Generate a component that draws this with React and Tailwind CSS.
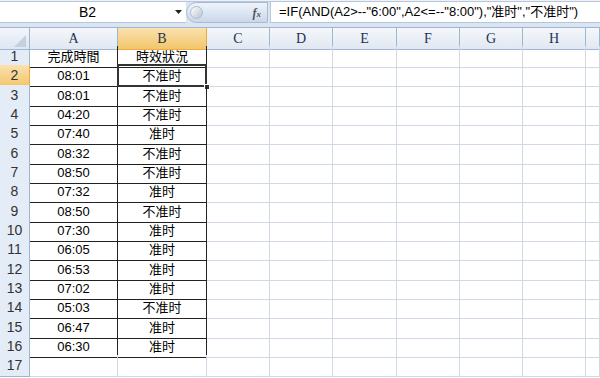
const rows = [
  ["完成時間", "時效狀況"],
  ["08:01", "不准时"],
  ["08:01", "不准时"],
  ["04:20", "不准时"],
  ["07:40", "准时"],
  ["08:32", "不准时"],
  ["08:50", "不准时"],
  ["07:32", "准时"],
  ["08:50", "不准时"],
  ["07:30", "准时"],
  ["06:05", "准时"],
  ["06:53", "准时"],
  ["07:02", "准时"],
  ["05:03", "不准时"],
  ["06:47", "准时"],
  ["06:30", "准时"],
  ["", ""],
];

const heights = [
  "h-[19px]", "h-[20px]", "h-[19px]", "h-[19px]", "h-[20px]", "h-[19px]",
  "h-[19px]", "h-[20px]", "h-[19px]", "h-[19px]", "h-[20px]", "h-[19px]",
  "h-[19px]", "h-[20px]", "h-[19px]", "h-[19px]", "h-[20px]",
];

const cols = ["A", "B", "C", "D", "E", "F", "G", "H", ""];
const grid = "grid grid-cols-[30px_88px_89px_63px_63px_64px_63px_63px_63px_1fr]";
const cjk = { fontFamily: '"Liberation Sans", "Noto Sans CJK TC", sans-serif' };

function FormulaBar() {
  return (
    <div className="h-[28px] bg-[#dbe5f2] border-b border-[#9eb6ce] flex flex-col">
      <div className="h-[2px] bg-[#eef2f8] border-b border-[#b7c6d9]" />
      <div className="flex h-[21px] items-stretch">
        <div className="w-[186px] bg-white border-b border-[#b7c6d9] flex items-center relative">
          <span className="w-[175px] text-center text-[14px] text-black font-['Liberation_Sans']">B2</span>
          <svg width="8" height="5" viewBox="0 0 8 5" className="absolute left-[175px] top-[8px]">
            <path d="M0 0h7L3.5 4z" fill="#222" />
          </svg>
        </div>
        <div className="w-[82px] rounded-l-full bg-gradient-to-b from-[#eef3fa] via-[#dce6f3] to-[#c9d7ea] border border-[#a9bbd3] flex items-center justify-between pl-[3px] pr-[6px]">
          <div className="w-[13px] h-[13px] rounded-full bg-gradient-to-br from-[#ffffff] to-[#b9c3cf] border border-[#b0bccb]" />
          <span className="text-[12px] italic font-bold text-[#555] font-['Liberation_Serif']">f<span className="text-[9px]">x</span></span>
        </div>
        <div className="w-[2px]" />
        <div className="flex-1 bg-white border-b border-l border-[#b7c6d9] flex items-center pl-[8px] text-[13px] text-black whitespace-nowrap" style={cjk}>
          =IF(AND(A2&gt;--"6:00",A2&lt;=--"8:00"),"准时","不准时")
        </div>
      </div>
    </div>
  );
}

function HeaderRow() {
  return (
    <div className={grid + " h-[18px]"}>
      <div className="bg-gradient-to-b from-[#f3f6fb] to-[#dde6f2] border-r border-b border-[#9eb6ce] relative">
        <svg width="12" height="12" viewBox="0 0 12 12" className="absolute right-[3px] bottom-[2px]">
          <path d="M12 0V12H0z" fill="#c6d0dc" />
        </svg>
      </div>
      {cols.map((c, i) => (
        <div
          key={i}
          className={
            "flex items-center justify-center border-r border-b text-[14px] font-['Liberation_Serif'] " +
            (c === "B"
              ? "bg-gradient-to-b from-[#fae1ae] to-[#f2c66a] border-[#f2a93b] text-[#1f3352]"
              : "bg-gradient-to-b from-[#f4f7fb] to-[#e1e8f2] border-[#9eb6ce] text-[#1f3352]")
          }
        >
          {c}
        </div>
      ))}
    </div>
  );
}

function DataRow({ n, data, h }) {
  const inTable = n <= 16;
  const cell = "flex items-center justify-center text-[13px] text-black border-r border-b ";
  return (
    <div className={grid + " " + h}>
      <div
        className={
          "flex items-center justify-center border-r border-b text-[14px] font-['Liberation_Sans'] " +
          (n === 2
            ? "bg-gradient-to-b from-[#fae1ae] to-[#f2c66a] border-[#f2a93b] text-[#333]"
            : "bg-[#e4ecf7] border-[#9eb6ce] text-[#333]")
        }
      >
        {n}
      </div>
      <div className={cell + (inTable ? "border-[#222]" : "border-[#d0d7e5]")} style={cjk}>
        {data[0]}
      </div>
      <div className={cell + (inTable ? "border-[#222]" : "border-[#d0d7e5]") + " relative"} style={cjk}>
        {data[1]}
        {n === 2 && (
          <>
            <div className="absolute -left-[1px] -top-[1px] -right-[1px] -bottom-[1px] border-2 border-[#333]" />
            <div className="absolute -right-[4px] -bottom-[4px] w-[6px] h-[6px] bg-[#333] border border-white" />
          </>
        )}
      </div>
      {cols.slice(2).map((c, i) => (
        <div key={i} className={"border-r border-b border-[#d0d7e5] " + (inTable && i === 0 ? "border-b-[#d0d7e5]" : "")} />
      ))}
    </div>
  );
}

export default function App() {
  return (
    <div className="w-[600px] h-[378px] overflow-hidden bg-white">
      <FormulaBar />
      <HeaderRow />
      {rows.map((r, i) => (
        <DataRow key={i} n={i + 1} data={r} h={heights[i]} />
      ))}
    </div>
  );
}
